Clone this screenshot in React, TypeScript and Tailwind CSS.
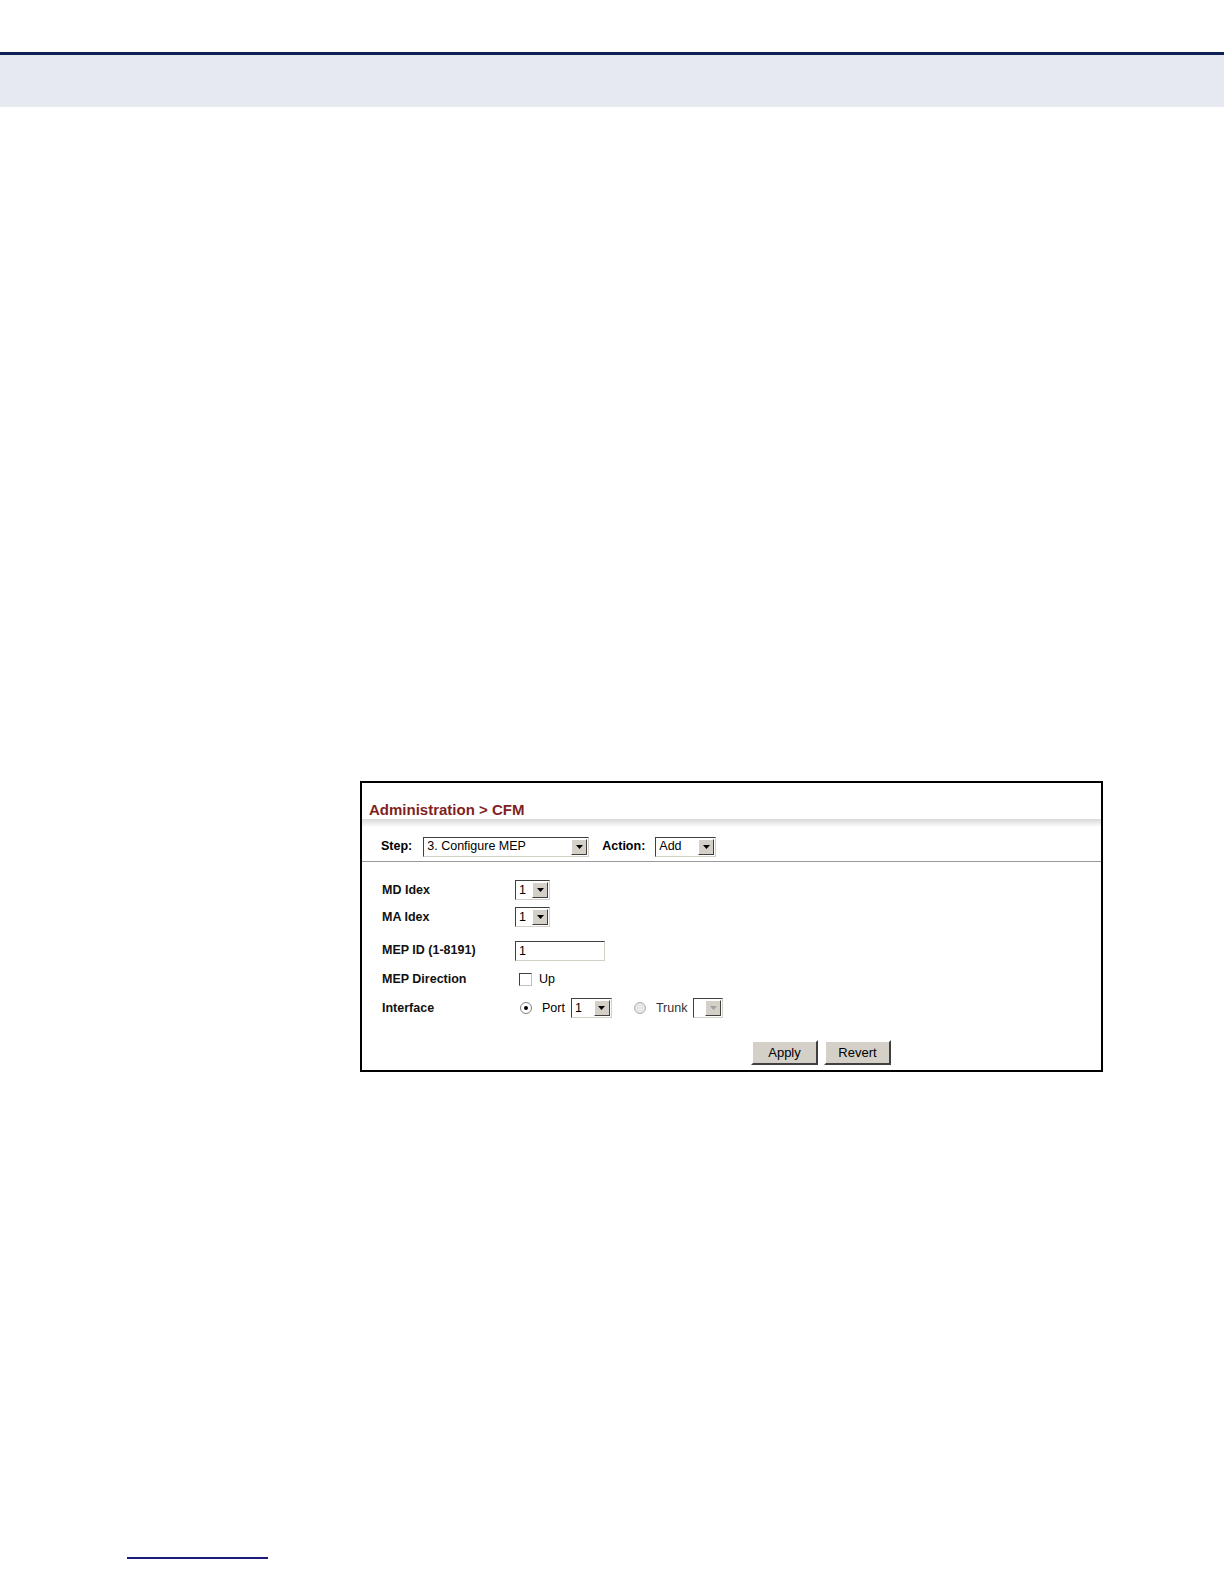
import { FC } from 'react';

const Arrow: FC<{ disabled?: boolean }> = ({ disabled }) => (
  <div className="w-[16px] h-[16px] bg-[#d4d0c8] border border-t-white border-l-white border-b-[#404040] border-r-[#404040] flex items-center justify-center">
    <svg width="7" height="4" viewBox="0 0 7 4">
      <path d="M0 0 L7 0 L3.5 4 Z" fill={disabled ? '#a0a0a0' : '#000'} />
    </svg>
  </div>
);

const Select: FC<{ value: string; w: string; disabled?: boolean }> = ({ value, w, disabled }) => (
  <div className={`${w} h-[20px] flex items-center bg-white border border-t-[#404040] border-l-[#404040] border-b-[#d4d0c8] border-r-[#d4d0c8] pl-[3px] pr-[1px]`}>
    <span className="flex-1 text-[12.5px] leading-none text-black">{value}</span>
    <Arrow disabled={disabled} />
  </div>
);

const Row: FC<{ label: string; children: React.ReactNode; h: string }> = ({ label, children, h }) => (
  <div className={`flex items-center ${h}`}>
    <div className="w-[133px] text-[12.5px] font-bold text-[#111]">{label}</div>
    <div className="flex items-center">{children}</div>
  </div>
);

const App: FC = () => {
  return (
    <div className="w-[1224px] h-[1584px] bg-white relative" style={{ fontFamily: '"Liberation Sans", Arial, sans-serif' }}>
      <div className="h-[52px]" />
      <div className="h-[3px] bg-[#0d2357]" />
      <div className="h-[52px] bg-[#e6e9f0]" />

      <div className="mt-[674px] ml-[360px] w-[743px] h-[291px] border-2 border-black flex flex-col">
        <div className="h-[36px] flex items-end pl-[7px] pb-[2px]">
          <span className="text-[15px] font-bold text-[#7f1f1f] leading-none">Administration &gt; CFM</span>
        </div>
        <div className="h-[8px] bg-gradient-to-b from-[#d8d8d8] to-white" />
        <div className="h-[35px] flex items-center pl-[19px] pt-[5px] border-b border-[#9a9a9a]">
          <span className="text-[12.5px] font-bold mr-[11px]">Step:</span>
          <Select value="3. Configure MEP" w="w-[166px]" />
          <span className="text-[12.5px] font-bold ml-[13px] mr-[10px]">Action:</span>
          <Select value="Add" w="w-[61px]" />
        </div>

        <div className="pl-[20px] pt-[17px]">
          <Row label="MD Idex" h="h-[22px]">
            <Select value="1" w="w-[35px]" />
          </Row>
          <Row label="MA Idex" h="h-[32px]">
            <Select value="1" w="w-[35px]" />
          </Row>
          <Row label="MEP ID (1-8191)" h="h-[35px]">
            <div className="w-[90px] h-[20px] bg-white border border-t-[#404040] border-l-[#404040] border-b-[#d4d0c8] border-r-[#d4d0c8] pl-[3px] text-[12.5px] leading-[18px]">1</div>
          </Row>
          <Row label="MEP Direction" h="h-[22px]">
            <div className="ml-[4px] w-[13px] h-[13px] border border-t-[#404040] border-l-[#404040] border-b-[#c0c0c0] border-r-[#c0c0c0] bg-white" />
            <span className="ml-[7px] text-[12.5px]">Up</span>
          </Row>
          <Row label="Interface" h="h-[36px]">
            <div className="ml-[5px] w-[12px] h-[12px] rounded-full border border-[#808080] bg-white flex items-center justify-center">
              <div className="w-[4px] h-[4px] rounded-full bg-black" />
            </div>
            <span className="ml-[10px] mr-[6px] text-[12.5px]">Port</span>
            <Select value="1" w="w-[41px]" />
            <div className="ml-[22px] w-[12px] h-[12px] rounded-full border border-[#b0b0b0] bg-[#e8e8e8]" />
            <span className="ml-[10px] mr-[6px] text-[12.5px] text-[#333]">Trunk</span>
            <Select value="" w="w-[30px]" disabled />
          </Row>
        </div>

        <div className="flex justify-start pl-[389px] mt-[14px]">
          <button className="w-[67px] h-[25px] bg-[#d4d0c8] border-2 border-t-white border-l-white border-b-[#404040] border-r-[#404040] text-[13px] text-black">Apply</button>
          <button className="ml-[6px] w-[67px] h-[25px] bg-[#d4d0c8] border-2 border-t-white border-l-white border-b-[#404040] border-r-[#404040] text-[13px] text-black">Revert</button>
        </div>
      </div>

      <div className="absolute left-[127px] top-[1557px] w-[141px] h-[2px] bg-[#1a1a7a]" />
    </div>
  );
};

export default App;
